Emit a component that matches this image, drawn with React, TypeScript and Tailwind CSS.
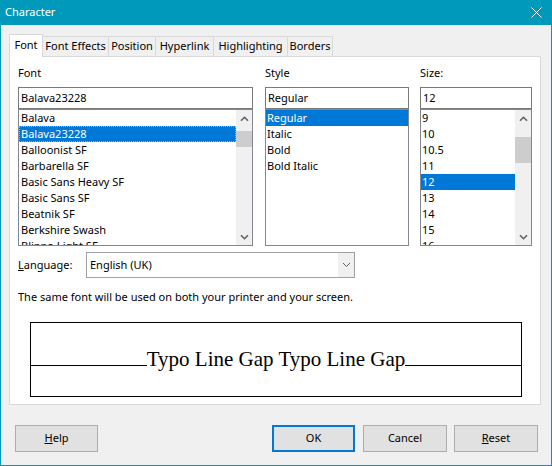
import React from "react";

function Chevron({ down }: { down?: boolean }) {
  return (
    <svg width="9" height="6" viewBox="0 0 9 6">
      <path
        d={down ? "M1 1.2 L4.5 4.7 L8 1.2" : "M1 4.8 L4.5 1.3 L8 4.8"}
        fill="none"
        stroke="#606060"
        strokeWidth="1.6"
      />
    </svg>
  );
}

type ListProps = {
  items: string[];
  selected: number;
  focus?: boolean;
  width: string;
  scroll?: { top: string; height: string };
  pad: string;
};

function ListBox({ items, selected, focus, width, scroll, pad }: ListProps) {
  return (
    <div className={`flex h-[137px] border border-[#828790] bg-white ${width}`}>
      <div className="flex-1 overflow-hidden">
        {items.map((it, i) => (
          <div
            key={it}
            className={`h-[16px] whitespace-nowrap text-[11px] leading-[16px] ${pad} ${
              i === selected ? "bg-[#0078d7] text-white" : "text-black"
            } ${i === selected && focus ? "outline-1 outline-dotted outline-[#e9a23b] -outline-offset-1" : ""}`}
          >
            {it}
          </div>
        ))}
      </div>
      {scroll && (
        <div className="flex w-[16px] flex-col bg-[#f0f0f0]">
          <div className="flex h-[17px] items-center justify-center">
            <Chevron />
          </div>
          <div className="flex-1">
            <div className={`w-[16px] bg-[#cdcdcd] ${scroll.top} ${scroll.height}`} />
          </div>
          <div className="flex h-[17px] items-center justify-center">
            <Chevron down />
          </div>
        </div>
      )}
    </div>
  );
}

function Input({ value, width }: { value: string; width: string }) {
  return (
    <div className={`h-[22px] border border-[#7a7a7a] bg-white pl-[2px] text-[11px] leading-[20px] ${width}`}>
      {value}
    </div>
  );
}

function Tab({ label, width, active }: { label: string; width: string; active?: boolean }) {
  if (active) {
    return (
      <div
        className={`relative z-10 -mb-px flex h-[23px] items-center justify-center whitespace-nowrap border border-b-0 border-[#d9d9d9] bg-white pb-[1px] text-[11px] ${width}`}
      >
        {label}
      </div>
    );
  }
  return (
    <div
      className={`-ml-px flex h-[20px] items-center justify-center whitespace-nowrap border border-b-0 border-[#d9d9d9] bg-[#f0f0f0] text-[11px] ${width}`}
    >
      {label}
    </div>
  );
}

function Button({
  children,
  className,
  primary,
}: {
  children: React.ReactNode;
  className?: string;
  primary?: boolean;
}) {
  return (
    <div
      className={`flex h-[27px] items-center justify-center bg-[#e1e1e1] text-[11px] ${
        primary ? "border-2 border-[#0078d7]" : "border border-[#adadad]"
      } ${className ?? ""}`}
    >
      {children}
    </div>
  );
}

export default function App() {
  const fonts = [
    "Balava",
    "Balava23228",
    "Balloonist SF",
    "Barbarella SF",
    "Basic Sans Heavy SF",
    "Basic Sans SF",
    "Beatnik SF",
    "Berkshire Swash",
    "Blippo Light SF",
  ];
  const styles = ["Regular", "Italic", "Bold", "Bold Italic"];
  const sizes = ["9", "10", "10.5", "11", "12", "13", "14", "15", "16"];

  return (
    <div className="flex h-[466px] w-[552px] flex-col border-x border-b border-[#0099bc] bg-[#f0f0f0] font-['Noto_Sans',sans-serif] text-black">
      {/* Title bar */}
      <div className="flex h-[25px] shrink-0 items-center justify-between bg-[#0099bc] pl-[4px] pr-[9px] text-[11px] text-white">
        <span>Character</span>
        <svg width="11" height="11" viewBox="0 0 11 11">
          <path d="M0.5 0.5 L10.5 10.5 M10.5 0.5 L0.5 10.5" stroke="white" strokeWidth="1" />
        </svg>
      </div>

      {/* Body */}
      <div className="pl-[8px] pt-[9px]">
        <div className="flex h-[22px] items-end">
          <Tab label="Font" width="w-[34px]" active />
          <Tab label="Font Effects" width="w-[67px]" />
          <Tab label="Position" width="w-[48px]" />
          <Tab label="Hyperlink" width="w-[59px]" />
          <Tab label="Highlighting" width="w-[75px]" />
          <Tab label="Borders" width="w-[46px]" />
        </div>

        <div className="h-[349px] w-[532px] border border-[#d9d9d9] bg-white pl-[8px] pt-[8px]">
          <div className="flex">
            <div className="w-[235px]">
              <div className="h-[16px] text-[11px] leading-[16px]">Font</div>
              <div className="mt-[6px]">
                <Input value="Balava23228" width="w-[235px]" />
                <ListBox
                  items={fonts}
                  selected={1}
                  focus
                  width="w-[235px]"
                  pad="pl-[2px]"
                  scroll={{ top: "mt-[4px]", height: "h-[16px]" }}
                />
              </div>
            </div>
            <div className="ml-[12px] w-[144px]">
              <div className="h-[16px] text-[11px] leading-[16px]">Style</div>
              <div className="mt-[6px]">
                <Input value="Regular" width="w-[144px]" />
                <ListBox items={styles} selected={0} width="w-[144px]" pad="pl-[1px]" />
              </div>
            </div>
            <div className="ml-[11px] w-[112px]">
              <div className="h-[16px] text-[11px] leading-[16px]">Size:</div>
              <div className="mt-[6px]">
                <Input value="12" width="w-[112px]" />
                <ListBox
                  items={sizes}
                  selected={4}
                  width="w-[112px]"
                  pad="pl-[1px]"
                  scroll={{ top: "mt-[10px]", height: "h-[26px]" }}
                />
              </div>
            </div>
          </div>

          {/* Language */}
          <div className="mt-[6px] flex h-[26px] items-center">
            <div className="w-[68px] text-[11px]">
              <span className="underline">L</span>anguage:
            </div>
            <div className="flex h-[26px] w-[269px] border border-[#a0a0a0] bg-white">
              <div className="flex-1 pl-[3px] text-[11px] leading-[24px]">English (UK)</div>
              <div className="flex w-[16px] items-center justify-center bg-[#f0f0f0]">
                <svg width="9" height="6" viewBox="0 0 9 6">
                  <path d="M1 1 L4.5 4.5 L8 1" fill="none" stroke="#606060" strokeWidth="1" />
                </svg>
              </div>
            </div>
          </div>

          <div className="mt-[11px] h-[16px] text-[11px] leading-[16px]">
            The same font will be used on both your printer and your screen.
          </div>

          {/* Preview */}
          <div className="ml-[12px] mt-[17px] h-[75px] w-[492px] border border-black bg-white pt-[26px]">
            <div className="flex items-baseline">
              <div className="h-px flex-1 bg-black" />
              <span className="font-['Liberation_Serif',serif] text-[21px] leading-[20px]">
                Typo Line Gap Typo Line Gap
              </span>
              <div className="h-px flex-1 bg-black" />
            </div>
          </div>
        </div>
      </div>

      {/* Footer */}
      <div className="mt-[20px] flex pl-[14px]">
        <Button className="w-[83px]">
          <span className="underline">H</span>elp
        </Button>
        <Button className="ml-[174px] w-[83px]" primary>
          OK
        </Button>
        <Button className="ml-[8px] w-[84px]">Cancel</Button>
        <Button className="ml-[7px] w-[84px]">
          <span className="underline">R</span>eset
        </Button>
      </div>
    </div>
  );
}
